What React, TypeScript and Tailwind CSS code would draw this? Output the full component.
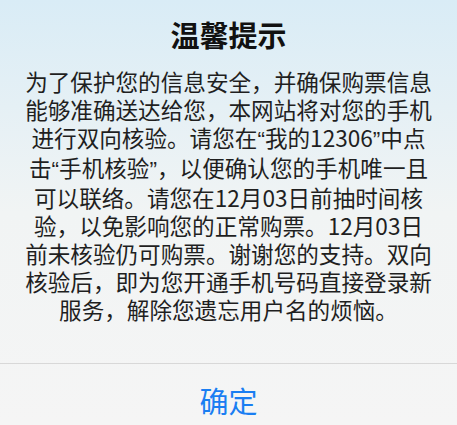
const lines = [
  "为了保护您的信息安全，并确保购票信息",
  "能够准确送达给您，本网站将对您的手机",
  "进行双向核验。请您在“我的12306”中点",
  "击“手机核验”，以便确认您的手机唯一且",
  "可以联络。请您在12月03日前抽时间核",
  "验，以免影响您的正常购票。12月03日",
  "前未核验仍可购票。谢谢您的支持。双向",
  "核验后，即为您开通手机号码直接登录新",
  "服务，解除您遗忘用户名的烦恼。",
];

// curly quotes are narrow in the original, not full width
function Line({ text }: { text: string }) {
  const parts = text.split(/([“”])/);
  return (
    <div className="whitespace-nowrap">
      {parts.map((p, i) =>
        p === "“" || p === "”" ? (
          <span key={i} style={{ fontFamily: '"Liberation Sans", sans-serif' }}>
            {p}
          </span>
        ) : (
          <span key={i}>{p}</span>
        )
      )}
    </div>
  );
}

function App() {
  return (
    <div
      className="w-[457px] h-[425px] overflow-hidden flex flex-col bg-[linear-gradient(180deg,#d9ecf6_0%,#e5f0f5_25%,#f1f4f4_50%,#f5f5f5_100%)]"
      style={{ fontFamily: '"Noto Sans CJK SC", "Noto Sans", sans-serif' }}
    >
      <h1 className="pt-[16px] text-center text-[29px] leading-[36px] font-bold text-[#111]">
        温馨提示
      </h1>
      <div className="mt-[16px] text-center text-[22.6px] leading-[28px] text-[#1f1f1f]">
        {lines.map((l, i) => (
          <Line key={i} text={l} />
        ))}
      </div>
      <div className="mt-[39px] h-px bg-[#d8d8d8]" />
      <button className="pt-[21px] text-center text-[29px] leading-[30px] text-[#1a7ef2]">
        确定
      </button>
    </div>
  );
}

export default App;
